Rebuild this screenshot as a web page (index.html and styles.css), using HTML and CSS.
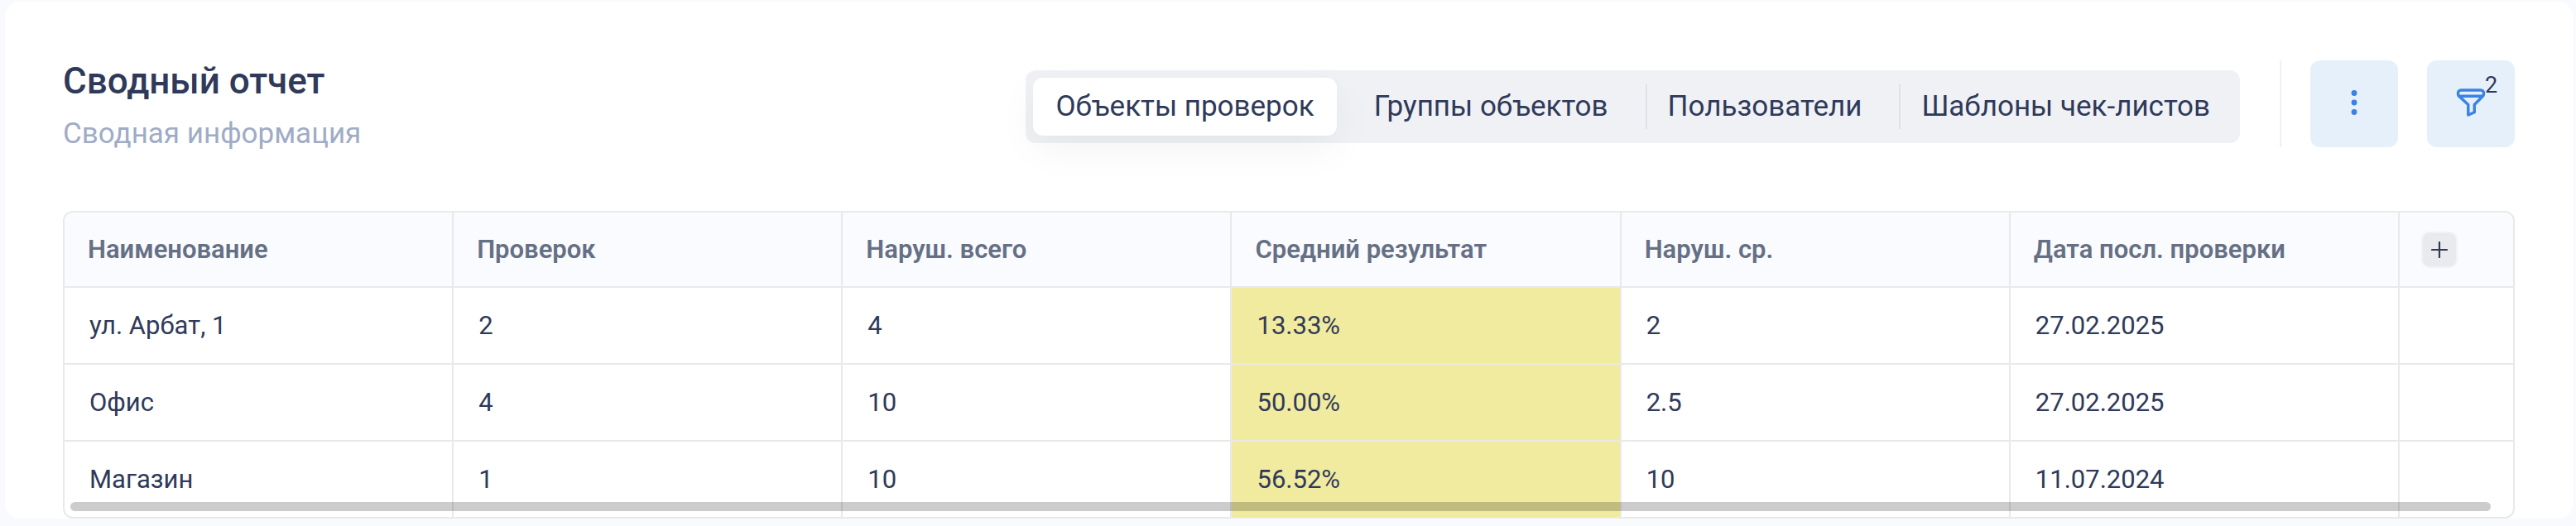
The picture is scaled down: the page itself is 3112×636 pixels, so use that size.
FILE: index.html
```html
<!DOCTYPE html>
<html lang="ru">
<head>
    <meta charset="UTF-8">
    <meta name="viewport" content="width=device-width, initial-scale=1.0">
    <title>Сводный отчет</title>
    <link rel="stylesheet" href="styles.css">
</head>
<body>
    <main class="card">
        <header class="card-header">
            <div class="heading">
                <h1 class="title">Сводный отчет</h1>
                <p class="subtitle">Сводная информация</p>
            </div>
            <nav class="tabs">
                <button class="tab active" type="button">Объекты проверок</button>
                <button class="tab" type="button">Группы объектов</button>
                <button class="tab divided" type="button">Пользователи</button>
                <button class="tab divided" type="button">Шаблоны чек-листов</button>
            </nav>
            <div class="actions">
                <button class="action-button" type="button" aria-label="Меню">
                    <svg class="icon" viewBox="0 0 36 36">
                        <circle cx="18" cy="6.5" r="3.4" fill="#3a82e4"/>
                        <circle cx="18" cy="18" r="3.4" fill="#3a82e4"/>
                        <circle cx="18" cy="29.5" r="3.4" fill="#3a82e4"/>
                    </svg>
                </button>
                <button class="action-button" type="button" aria-label="Фильтр">
                    <svg class="icon" viewBox="0 0 36 36" fill="none" stroke="#3a82e4" stroke-width="3.4" stroke-linejoin="round" stroke-linecap="round">
                        <path d="M6 3h24a3.500 3.500 0 0 1 3.500 3.500v1c0 1-.4 2-1.100 2.700L22.300 20.500v9.300L14.800 33V20.500L3.600 10.200A3.800 3.800 0 0 1 2.500 7.500v-1A3.500 3.500 0 0 1 6 3z"/>
                        <path d="M4 10.200h28"/>
                    </svg>
                    <span class="badge">2</span>
                </button>
            </div>
        </header>

        <div class="table-wrap">
            <table class="report">
                <thead>
                    <tr>
                        <th>Наименование</th>
                        <th>Проверок</th>
                        <th>Наруш. всего</th>
                        <th>Средний результат</th>
                        <th>Наруш. ср.</th>
                        <th>Дата посл. проверки</th>
                        <th class="add-col">
                            <button class="add-button" type="button" aria-label="Добавить столбец">
                                <svg class="plus" viewBox="0 0 20 20" stroke="#2f3a5a" stroke-width="2.2" stroke-linecap="round">
                                    <path d="M10 1v18M1 10h18"/>
                                </svg>
                            </button>
                        </th>
                    </tr>
                </thead>
                <tbody>
                    <tr>
                        <td>ул. Арбат, 1</td>
                        <td>2</td>
                        <td>4</td>
                        <td class="medium">13.33%</td>
                        <td>2</td>
                        <td>27.02.2025</td>
                        <td></td>
                    </tr>
                    <tr>
                        <td>Офис</td>
                        <td>4</td>
                        <td>10</td>
                        <td class="medium">50.00%</td>
                        <td>2.5</td>
                        <td>27.02.2025</td>
                        <td></td>
                    </tr>
                    <tr>
                        <td>Магазин</td>
                        <td>1</td>
                        <td>10</td>
                        <td class="medium">56.52%</td>
                        <td>10</td>
                        <td>11.07.2024</td>
                        <td></td>
                    </tr>
                </tbody>
            </table>
            <div class="scroll-thumb"></div>
        </div>
    </main>
</body>
</html>
```
FILE: styles.css
```css
* {
    box-sizing: border-box;
}

body {
    margin: 0;
    padding: 2px 4px 9px 6px;
    background-color: #f9fafd;
    color: #2f3a5a;
    font-family: Roboto, sans-serif;
}

button {
    border: none;
    padding: 0;
    font-family: inherit;
    color: inherit;
    cursor: pointer;
}

.card {
    padding: 71px 70px 0;
    background-color: #fff;
    border-radius: 18px;
}

.card-header {
    display: flex;
    align-items: flex-start;
    margin-bottom: 76px;
}

.heading {
    flex-grow: 1;
}

.title {
    margin: 0;
    font-size: 44px;
    font-weight: 500;
    line-height: 50px;
}

.subtitle {
    margin: 22px 0 0;
    font-size: 35px;
    line-height: 34px;
    color: #9facc6;
}

.tabs {
    display: flex;
    gap: 18px;
    margin-top: 12px;
    padding: 9px;
    background-color: #f0f1f5;
    border-radius: 12px;
}

.tab {
    position: relative;
    height: 70px;
    padding: 0 27px 2px;
    background: none;
    border-radius: 12px;
    font-size: 35px;
    white-space: nowrap;
}

.tab.active {
    background-color: #fff;
    box-shadow: 0 16px 48px rgba(0, 0, 0, 0.05);
}

.tab.divided::before {
    content: "";
    position: absolute;
    top: 8px;
    bottom: 8px;
    left: 0;
    width: 2px;
    background-color: #dfe1e6;
}

.actions {
    display: flex;
    gap: 35px;
    margin-left: 48px;
    padding-left: 35px;
    border-left: 2px solid #f0f1f5;
}

.action-button {
    position: relative;
    display: flex;
    justify-content: center;
    align-items: center;
    width: 106px;
    height: 105px;
    padding-bottom: 3px;
    background-color: #e5f0fa;
    border-radius: 12px;
}

.icon {
    width: 36px;
    height: 36px;
}

.badge {
    position: absolute;
    top: 16px;
    left: 70px;
    font-size: 27px;
    line-height: 28px;
}

.table-wrap {
    position: relative;
    overflow: hidden;
    border: 2px solid #e9e9e9;
    border-radius: 12px;
}

.report {
    width: 100%;
    table-layout: fixed;
    border-collapse: separate;
    border-spacing: 0;
    font-size: 31px;
    text-align: left;
}

.report th,
.report td {
    height: 93px;
    padding: 0 30px;
    border-right: 2px solid #e9e9e9;
    border-bottom: 2px solid #e9e9e9;
}

.report th {
    height: 91px;
    padding: 0 28px;
    background-color: #fafbff;
    color: #667085;
    font-weight: 600;
}

.report th:last-child,
.report td:last-child {
    border-right: none;
}

.report tr:last-child td {
    height: 91px;
    border-bottom: none;
}

.report .add-col {
    width: 137px;
    padding: 0 26px;
}

.report .medium {
    background-color: #f1eb9f;
}

.add-button {
    display: flex;
    justify-content: center;
    align-items: center;
    width: 44px;
    height: 44px;
    background-color: #e9eaee;
    border: 2px solid #f1f2f5;
    border-radius: 10px;
}

.plus {
    width: 20px;
    height: 20px;
}

.scroll-thumb {
    position: absolute;
    left: 7px;
    right: 27px;
    bottom: 7px;
    height: 11px;
    background-color: rgba(0, 0, 0, 0.2);
    border-radius: 6px;
}
```
